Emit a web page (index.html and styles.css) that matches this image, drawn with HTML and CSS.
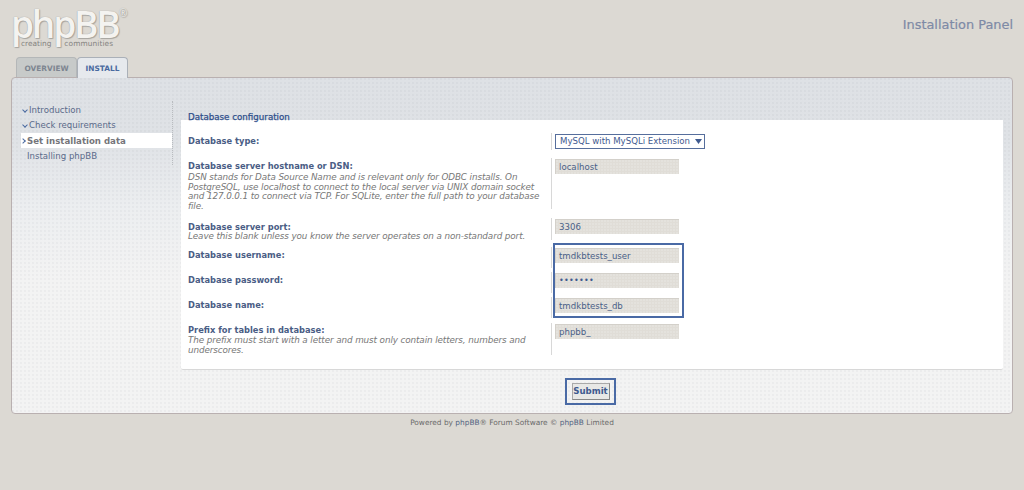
FILE: index.html
```html
<!DOCTYPE html>
<html lang="en">
<head>
<meta charset="utf-8">
<title>Installation Panel</title>
<link rel="stylesheet" href="styles.css">
</head>
<body>
<div class="page">
  <header class="top">
    <div class="logo">
      <div class="logo-name">phpBB<span class="logo-reg">®</span></div>
      <div class="logo-tag"><span>creating</span><span class="logo-comm">communities</span></div>
    </div>
    <div class="panel-title">Installation Panel</div>
  </header>
  <nav class="tabs">
    <a class="tab">OVERVIEW</a>
    <a class="tab tab-active">INSTALL</a>
  </nav>
  <main class="panel">
    <ul class="side">
      <li class="side-item done">Introduction</li>
      <li class="side-item done">Check requirements</li>
      <li class="side-item current">Set installation data</li>
      <li class="side-item todo">Installing phpBB</li>
    </ul>
    <div class="content">
      <section class="box">
        <h2 class="legend">Database configuration</h2>
        <div class="row r-type">
          <div class="lab"><b>Database type:</b></div>
          <div class="val"><div class="select">MySQL with MySQLi Extension<svg class="arrow" width="7" height="5" viewBox="0 0 7 5"><path d="M0 0h7L3.5 5z"/></svg></div></div>
        </div>
        <div class="row r-host">
          <div class="lab"><b>Database server hostname or DSN:</b><i>DSN stands for Data Source Name and is relevant only for ODBC installs. On PostgreSQL, use localhost to connect to the local server via UNIX domain socket and 127.0.0.1 to connect via TCP. For SQLite, enter the full path to your database file.</i></div>
          <div class="val"><div class="input">localhost</div></div>
        </div>
        <div class="row r-port">
          <div class="lab"><b>Database server port:</b><i>Leave this blank unless you know the server operates on a non-standard port.</i></div>
          <div class="val"><div class="input">3306</div></div>
        </div>
        <div class="cred">
          <div class="row r-cred">
            <div class="lab"><b>Database username:</b></div>
            <div class="val"><div class="input">tmdkbtests_user</div></div>
          </div>
          <div class="row r-cred">
            <div class="lab"><b>Database password:</b></div>
            <div class="val"><div class="input dots">•••••••</div></div>
          </div>
          <div class="row r-cred">
            <div class="lab"><b>Database name:</b></div>
            <div class="val"><div class="input">tmdkbtests_db</div></div>
          </div>
          <div class="mark mark-cred"></div>
        </div>
        <div class="row r-prefix">
          <div class="lab"><b>Prefix for tables in database:</b><i>The prefix must start with a letter and must only contain letters, numbers and underscores.</i></div>
          <div class="val"><div class="input">phpbb_</div></div>
        </div>
      </section>
      <div class="actions">
        <div class="submit-mark"><span class="submit">Submit</span></div>
      </div>
    </div>
  </main>
  <footer class="foot">Powered by <span class="foot-link">phpBB</span>® Forum Software © <span class="foot-link">phpBB</span> Limited</footer>
</div>
</body>
</html>
```
FILE: styles.css
```css
* { box-sizing: border-box; }
html, body { margin: 0; padding: 0; height: 100%; }
body {
  background: #dcd9d3;
  font-family: "DejaVu Sans", Verdana, sans-serif;
  font-size: 8.6px;
  color: #536482;
  overflow: hidden;
}
.page { padding: 0 11px; }
.top { display: flex; justify-content: space-between; height: 57px; }
.logo { width: 125px; padding-top: 5px; }
.logo-name {
  font-family: "Open Sans", sans-serif;
  font-weight: 600;
  font-size: 37px;
  line-height: 38px;
  height: 35px;
  letter-spacing: -2.2px;
  color: #f4f3f0;
  text-shadow: 0 0 1px #8f8e8b, 1px 1px 1px #a9a7a2;
  position: relative;
  white-space: nowrap;
}
.logo-reg {
  position: absolute; left: 108px; top: 2px;
  font-size: 10px; line-height: 12px; font-weight: 400;
  color: #f4f3f0; letter-spacing: 0;
}
.logo-tag {
  display: flex; gap: 13px; padding-left: 10px;
  font-size: 7.4px; line-height: 8px; color: #84837f; white-space: nowrap;
}
.logo-comm { letter-spacing: .1px; }
.panel-title {
  font-size: 12.9px; line-height: 15px; padding-top: 17px;
  color: #7e8aa6;
  -webkit-text-stroke: .2px #7e8aa6;
}
.tabs { display: flex; padding-left: 5px; height: 20px; position: relative; z-index: 1; }
.tab {
  height: 20px; padding: 6px 0 0;
  font-size: 7.4px; line-height: 9px; font-weight: bold;
  background: #c7cac9; color: #7d8590;
  border: 1px solid #b4b7b8; border-bottom: 0;
  border-radius: 4px 4px 0 0;
  width: 61px; white-space: nowrap; text-align: center;
}
.tab-active {
  width: 51px; background: #e6e9ed; color: #4a6aa0; height: 21px; border-color: #aab0b8;
}
.panel {
  height: 337px;
  border: 1px solid #b9b0b0;
  border-radius: 4px;
  background-color: #f3f3f3;
  background-image:
    radial-gradient(circle at 1px 1px, rgba(120,125,135,.06) .7px, transparent 1px),
    linear-gradient(#dee1e5 0, #dfe2e6 60px, #eceef0 130px, #f3f3f3 200px);
  background-size: 4px 4px, auto;
  display: flex;
  padding: 23px 9px 0 9px;
}
.side {
  list-style: none; margin: 0; padding: 1px 0 0;
  width: 152px; height: 64px; flex: none;
  border-right: 1px dotted #b9bcc0;
}
.side-item { height: 15.3px; line-height: 17px; white-space: nowrap; color: #5a6a8a; }
.done { padding-left: 8px; position: relative; }
.done::before {
  content: ""; position: absolute; left: 2px; top: 6px; width: 3px; height: 3px;
  border-right: 1px solid #4a6aa0; border-bottom: 1px solid #4a6aa0; transform: rotate(45deg);
}
.current {
  background: #fff; font-weight: bold; color: #75757a; padding-left: 6px; position: relative;
}
.current::before {
  content: ""; position: absolute; left: 0; top: 6px; width: 3px; height: 3px;
  border-right: 1px solid #4a6aa0; border-top: 1px solid #4a6aa0; transform: rotate(45deg);
}
.todo { padding-left: 6px; }
.content { flex: 1; padding-left: 8px; min-width: 0; }
.box {
  background: #fff; height: 250px; margin-top: 19px; position: relative;
  border-bottom: 1px solid #d8d8d8; border-radius: 0 0 2px 2px;
  padding: 13px 0 0 7px;
}
.legend {
  position: absolute; left: 7px; top: -8px; margin: 0;
  font-size: 8.7px; line-height: 11px; font-weight: normal; color: #30508c;
  -webkit-text-stroke: .25px #30508c;
}
.row { display: flex; }
.lab { width: 363px; flex: none; padding-top: 1px; }
.lab b { display: block; font-size: 8.3px; line-height: 10px; font-weight: bold; color: #4a5d85; padding-top: 2px; }
.lab i { display: block; width: 356px; font-size: 8.8px; letter-spacing: -.1px; line-height: 9.7px; color: #777; font-style: italic; padding-top: 2px; }
.val { border-left: 1px solid #d8d8d8; padding-left: 3px; flex: none; }
.r-type { height: 25px; }
.r-type .val { height: 17px; }
.r-host { height: 60px; }
.r-host .val { height: 51px; }
.r-port { height: 29px; }
.r-port .lab { padding-top: 2px; }
.r-port .lab i { padding-top: 0; }
.r-port .val { height: 22px; }
.r-cred { height: 25px; }
.r-cred .val { height: 21px; }
.r-cred .lab { padding-top: 1px; }
.r-prefix .lab { padding-top: 0; }
.r-prefix .lab i { padding-top: 1px; }
.r-prefix .val { height: 32px; }
.input {
  width: 124px; height: 15px; line-height: 14px; padding-left: 3px;
  background-color: #e0ddd7;
  background-image: radial-gradient(circle at 1px 1px, rgba(255,255,255,.2) .6px, transparent 1px);
  background-size: 3px 3px;
  border-top: 1px solid #d3d0ca; border-left: 1px solid #d3d0ca;
  color: #4a5f88;
  margin-top: 1px;
  white-space: nowrap;
}
.dots { font-size: 8px; letter-spacing: .3px; color: #3f5a8f; }
.select {
  width: 150px; height: 15px; line-height: 13px; margin-top: 1px;
  border: 1px solid #566e9c; background: #fff; color: #3f5a8f;
  padding-left: 4px; display: flex; align-items: center; white-space: nowrap; gap: 5px;
  font-size: 8.6px;
}
.arrow { fill: #3f5a8f; flex: none; }
.cred { position: relative; height: 76px; }
.mark { position: absolute; border: 2px solid #4a6aa5; pointer-events: none; }
.mark-cred { left: 365px; top: -4px; width: 131px; height: 75px; }
.actions { display: flex; justify-content: center; padding: 8px 3px 0 0; }
.submit-mark {
  width: 51px; height: 27px; border: 2px solid #4a6aa5;
  display: flex; align-items: center; justify-content: center;
}
.submit {
  display: block; width: 38px; height: 17px; line-height: 15px; text-align: center;
  background: #e8e8e6; border: 1px solid #a9a9a9; border-right-color: #888; border-bottom-color: #888;
  font-weight: bold; color: #3f5a8f;
}
.foot { text-align: center; font-size: 7.4px; line-height: 9px; padding-top: 4px; color: #6a6a6a; }
.foot-link { color: #536482; }
```
